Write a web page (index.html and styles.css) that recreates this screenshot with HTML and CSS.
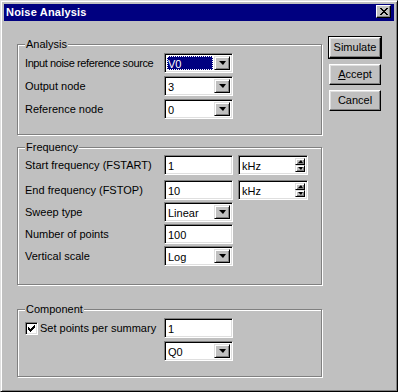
FILE: index.html
```html
<!DOCTYPE html>
<html lang="en">
  <head>
    <meta charset="UTF-8" />
    <title>Noise Analysis</title>
    <link rel="stylesheet" href="styles.css">
  </head>
  <body>
    <div class="window">
      <!-- caption -->
      <div class="titlebar">
        <span class="title">Noise Analysis</span>
        <span class="close">
          <svg width="8" height="7" viewBox="0 0 8 7" shape-rendering="crispEdges">
            <path d="M0 0h2v1h1v1h2v-1h1v-1h2v1h-1v1h-1v1h-1v1h1v1h1v1h1v1h-2v-1h-1v-1h-2v1h-1v1h-2v-1h1v-1h1v-1h1v-1h-1v-1h-1v-1h-1z" fill="#000"/>
          </svg>
        </span>
      </div>

      <div class="client">
        <div class="groups">
          <fieldset class="group analysis">
            <legend>Analysis</legend>
            <div class="row">
              <label class="tight">Input noise reference source</label>
              <div class="combo">
                <span class="value sel">V0</span>
                <span class="drop"><i class="arrow"></i></span>
              </div>
            </div>
            <div class="row">
              <label>Output node</label>
              <div class="combo">
                <span class="value">3</span>
                <span class="drop"><i class="arrow"></i></span>
              </div>
            </div>
            <div class="row">
              <label>Reference node</label>
              <div class="combo">
                <span class="value">0</span>
                <span class="drop"><i class="arrow"></i></span>
              </div>
            </div>
          </fieldset>

          <fieldset class="group frequency">
            <legend>Frequency</legend>
            <div class="row first">
              <label>Start frequency (FSTART)</label>
              <div class="edit">1</div>
              <div class="spin">
                <span class="value">kHz</span>
                <span class="spinbtns">
                  <span class="sbtn"><i class="up"></i></span>
                  <span class="sbtn"><i class="down"></i></span>
                </span>
              </div>
            </div>
            <div class="row">
              <label>End frequency (FSTOP)</label>
              <div class="edit">10</div>
              <div class="spin">
                <span class="value">kHz</span>
                <span class="spinbtns">
                  <span class="sbtn"><i class="up"></i></span>
                  <span class="sbtn"><i class="down"></i></span>
                </span>
              </div>
            </div>
            <div class="row">
              <label>Sweep type</label>
              <div class="combo">
                <span class="value">Linear</span>
                <span class="drop"><i class="arrow"></i></span>
              </div>
            </div>
            <div class="row">
              <label>Number of points</label>
              <div class="edit">100</div>
            </div>
            <div class="row">
              <label>Vertical scale</label>
              <div class="combo">
                <span class="value">Log</span>
                <span class="drop"><i class="arrow"></i></span>
              </div>
            </div>
          </fieldset>

          <fieldset class="group component">
            <legend>Component</legend>
            <div class="row">
              <label class="check">
                <span class="box">
                  <svg width="7" height="7" viewBox="0 0 7 7" shape-rendering="crispEdges">
                    <path d="M6 0h1v3h-1v1h-1v1h-1v1h-1v1h-1v-1h-1v-1h-1v-3h1v1h1v1h1v-1h1v-1h1v-1h1z" fill="#000"/>
                  </svg>
                </span>
                Set points per summary
              </label>
              <div class="edit">1</div>
            </div>
            <div class="row">
              <label></label>
              <div class="combo">
                <span class="value">Q0</span>
                <span class="drop"><i class="arrow"></i></span>
              </div>
            </div>
          </fieldset>
        </div>

        <div class="buttons">
          <button class="btn default">Simulate</button>
          <button class="btn"><u>A</u>ccept</button>
          <button class="btn">Cancel</button>
        </div>
      </div>
    </div>
  </body>
</html>
```

FILE: styles.css
```css
* {
  box-sizing: border-box;
  margin: 0;
  padding: 0;
}
body {
  background-color: #c0c0c0;
  font: 11px/13px "Liberation Sans", Arial, sans-serif;
  color: #000;
}

/* window frame */
.window {
  width: 398px;
  height: 392px;
  padding: 3px;
  background-color: #c0c0c0;
  border: 1px solid;
  border-color: #dfdfdf #000 #000 #dfdfdf;
  box-shadow: inset 1px 1px #fff, inset -1px -1px #808080;
}
.titlebar {
  display: flex;
  justify-content: space-between;
  height: 17px;
  padding-left: 2px;
  background-color: #000080;
  color: #fff;
}
.title {
  font-weight: bold;
  line-height: 16px;
  letter-spacing: 0.2px;
}
.close {
  display: flex;
  align-items: center;
  justify-content: center;
  width: 15px;
  height: 13px;
  margin: 1px 3px 0 0;
  background-color: #c0c0c0;
  border: 1px solid;
  border-color: #fff #000 #000 #fff;
  box-shadow: inset -1px -1px #808080;
}

/* dialog body */
.client {
  display: flex;
  padding-left: 13px;
}
.groups {
  width: 305px;
  padding-top: 17px;
}
.group {
  border: 1px solid #808080;
  box-shadow: inset 1px 1px #fff, 1px 1px #fff;
  padding: 2px 0 15px 7px;
}
.group legend {
  margin-left: 0;
  padding: 0 1px;
  background-color: #c0c0c0;
}
.frequency {
  margin-top: 6px;
  padding-top: 1px;
  padding-bottom: 16px;
}
.component {
  margin-top: 18px;
}

.row {
  display: flex;
  align-items: center;
  height: 20px;
  margin-bottom: 3px;
}
.row:last-child {
  margin-bottom: 0;
}
.frequency .row {
  margin-bottom: 2px;
}
.frequency .row.first {
  margin-bottom: 5px;
}
.row label {
  width: 139px;
  flex: none;
  white-space: nowrap;
}
.row label.tight {
  letter-spacing: -0.4px;
}

/* sunken controls */
.edit,
.combo,
.spin {
  display: flex;
  width: 69px;
  height: 20px;
  padding: 2px;
  background-color: #fff;
  border: 1px solid;
  border-color: #808080 #fff #fff #808080;
  box-shadow: inset 1px 1px #000, inset -1px -1px #dfdfdf;
}
.edit {
  padding-left: 3px;
  line-height: 16px;
}
.value {
  flex: 1;
  padding-left: 1px;
  line-height: 16px;
}
.value.sel {
  margin-right: 1px;
  background-color: #000080;
  color: #fff;
  outline: 1px dotted #fff;
  outline-offset: -1px;
}
.drop,
.sbtn {
  display: flex;
  align-items: center;
  justify-content: center;
  background-color: #c0c0c0;
  border: 1px solid;
  border-color: #dfdfdf #000 #000 #dfdfdf;
  box-shadow: inset 1px 1px #fff, inset -1px -1px #808080;
}
.drop {
  width: 16px;
}
.arrow {
  width: 0;
  height: 0;
  border-top: 4px solid #000;
  border-left: 4px solid transparent;
  border-right: 3px solid transparent;
}

.spin {
  width: 70px;
  margin-left: 5px;
}
.spinbtns {
  display: flex;
  flex-direction: column;
  width: 10px;
}
.sbtn {
  flex: 1;
}
.up,
.down {
  width: 0;
  height: 0;
  border-left: 3px solid transparent;
  border-right: 2px solid transparent;
}
.up {
  border-bottom: 3px solid #000;
}
.down {
  border-top: 3px solid #000;
}

/* checkbox */
.check {
  display: flex;
  align-items: center;
}
.box {
  display: flex;
  align-items: center;
  justify-content: center;
  width: 13px;
  height: 13px;
  margin-right: 2px;
  background-color: #fff;
  border: 1px solid;
  border-color: #808080 #fff #fff #808080;
  box-shadow: inset 1px 1px #000, inset -1px -1px #dfdfdf;
}

/* push buttons */
.buttons {
  display: flex;
  flex-direction: column;
  align-items: flex-start;
  gap: 5px;
  padding: 16px 0 0 7px;
}
.btn {
  width: 52px;
  height: 21px;
  font: inherit;
  color: #000;
  background-color: #c0c0c0;
  border: 1px solid;
  border-color: #fff #000 #000 #fff;
  box-shadow: inset -1px -1px #808080, inset 1px 1px #dfdfdf;
}
.btn.default {
  margin-bottom: 1px;
  outline: 1px solid #000;
}
.btn u {
  text-decoration: underline;
}
```
